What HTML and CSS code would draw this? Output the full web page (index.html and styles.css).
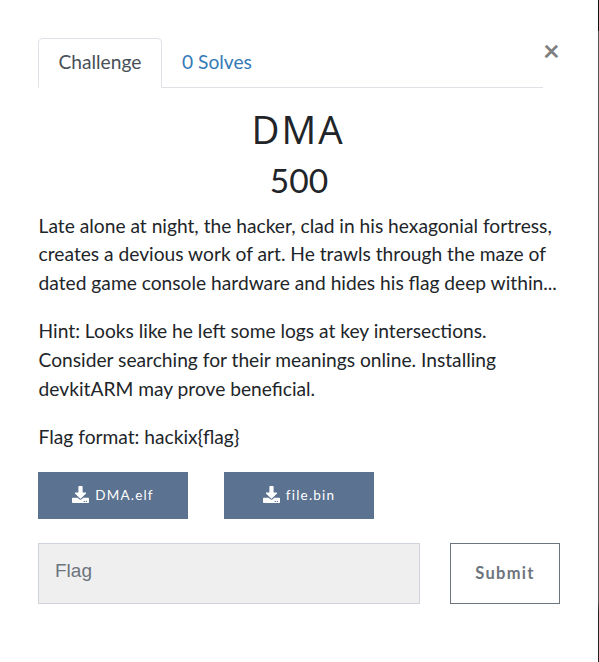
FILE: index.html
```html
<!DOCTYPE html>
<html lang="en">
<head>
<meta charset="utf-8">
<title>DMA</title>
<link rel="stylesheet" href="styles.css">
</head>
<body>
<main class="modal">
  <header class="top">
    <nav class="tabs"><a class="tab active">Challenge</a><a class="tab">0 Solves</a></nav>
    <button class="close" aria-label="Close">×</button>
  </header>
  <h2 class="name">DMA</h2>
  <h3 class="value">500</h3>
  <div class="desc">
    <p>Late alone at night, the hacker, clad in his hexagonial fortress,<br>creates a devious work of art. He trawls through the maze of<br>dated game console hardware and hides his flag deep within...</p>
    <p>Hint: Looks like he left some logs at key intersections.<br>Consider searching for their meanings online. Installing<br>devkitARM may prove beneficial.</p>
    <p>Flag format: hackix{flag}</p>
  </div>
  <div class="files">
    <a class="file"><svg class="icon" viewBox="0 0 512 512"><path d="M216 0h80c13.300 0 24 10.700 24 24v168h87.700c17.800 0 26.700 21.500 14.100 34.100L269.700 378.300c-7.500 7.500-19.800 7.500-27.300 0L90.100 226.100c-12.600-12.600-3.700-34.100 14.100-34.100H192V24c0-13.300 10.700-24 24-24zm296 376v112c0 13.300-10.700 24-24 24H24c-13.300 0-24-10.700-24-24V376c0-13.300 10.700-24 24-24h146.700l49 49c20.100 20.100 52.500 20.100 72.600 0l49-49H488c13.300 0 24 10.700 24 24zm-124 88c0-11-9-20-20-20s-20 9-20 20 9 20 20 20 20-9 20-20zm64 0c0-11-9-20-20-20s-20 9-20 20 9 20 20 20 20-9 20-20z"/></svg><span>DMA.elf</span></a>
    <a class="file"><svg class="icon" viewBox="0 0 512 512"><path d="M216 0h80c13.300 0 24 10.700 24 24v168h87.700c17.800 0 26.700 21.500 14.100 34.100L269.700 378.300c-7.500 7.500-19.800 7.500-27.300 0L90.100 226.100c-12.600-12.600-3.700-34.100 14.100-34.100H192V24c0-13.300 10.700-24 24-24zm296 376v112c0 13.300-10.700 24-24 24H24c-13.300 0-24-10.700-24-24V376c0-13.300 10.700-24 24-24h146.700l49 49c20.100 20.100 52.500 20.100 72.600 0l49-49H488c13.300 0 24 10.700 24 24zm-124 88c0-11-9-20-20-20s-20 9-20 20 9 20 20 20 20-9 20-20zm64 0c0-11-9-20-20-20s-20 9-20 20 9 20 20 20 20-9 20-20z"/></svg><span>file.bin</span></a>
  </div>
  <form class="submit-row">
    <input class="flag" placeholder="Flag">
    <button class="submit" type="button">Submit</button>
  </form>
</main>
</body>
</html>
```
FILE: styles.css
```css
* { box-sizing: border-box; }
body { margin: 0; background: #fff; color: #212529; font: 19.200px/28.800px Lato, sans-serif; }
.modal { height: 662px; padding: 38px 38px 0; border-right: 1px solid; border-image: linear-gradient(#111 32px, #555 32px, #555 600px, #222 612px) 1; }
.top { display: flex; height: 50px; }
.tabs { display: flex; width: 505px; border-bottom: 1px solid #dee2e6; }
.tab { height: 50px; padding: 10px 20px; color: #337ab7; white-space: nowrap; }
.tab.active { width: 124px; padding: 9px 19px 9px 19.500px; border: 1px solid #dee2e6; border-bottom-color: #fff; border-radius: 5px 5px 0 0; color: #495057; }
.close { margin: -2px 0 0; padding: 0; border: 0; height: 28px; background: none; color: #7f7f7f; font: 700 28.800px/28px Lato, sans-serif; }
.name { margin: 18px 0 0; height: 46px; padding-right: 2px; font: 400 38.600px/46px "Open Sans", sans-serif; letter-spacing: 2px; text-align: center; }
.value { margin: 10px 0 0; height: 37px; font-size: 33.600px; line-height: 37px; font-weight: 400; text-align: center; }
.desc { margin: 12.500px 0 0 .6px; white-space: nowrap; }
.desc p { margin: 0 0 19.200px; }
.desc p:last-child { margin-bottom: 0; }
.files { display: flex; gap: 36px; margin-top: 20.900px; }
.file { display: flex; align-items: center; justify-content: center; gap: 6px; width: 150px; height: 47px; padding: 0 0 1px; background: #5b7290; color: #fff; font-size: 13.500px; letter-spacing: 1.200px; }
.icon { width: 17px; height: 17px; margin-top: -2px; fill: currentColor; }
.submit-row { display: flex; gap: 30px; margin-top: 24px; }
.flag { width: 382px; height: 61px; padding: 0 16px 6px; border: 1px solid #ced4da; border-radius: 0; background: #efefef; font: 19px "Liberation Sans", sans-serif; }
.flag::placeholder { color: #6c757d; }
.submit { width: 110px; height: 61px; padding: 0 0 1px; border: 1px solid #6c757d; background: #fff; color: #6c757d; font: 700 16.500px Lato, sans-serif; letter-spacing: 1.300px; }
```
